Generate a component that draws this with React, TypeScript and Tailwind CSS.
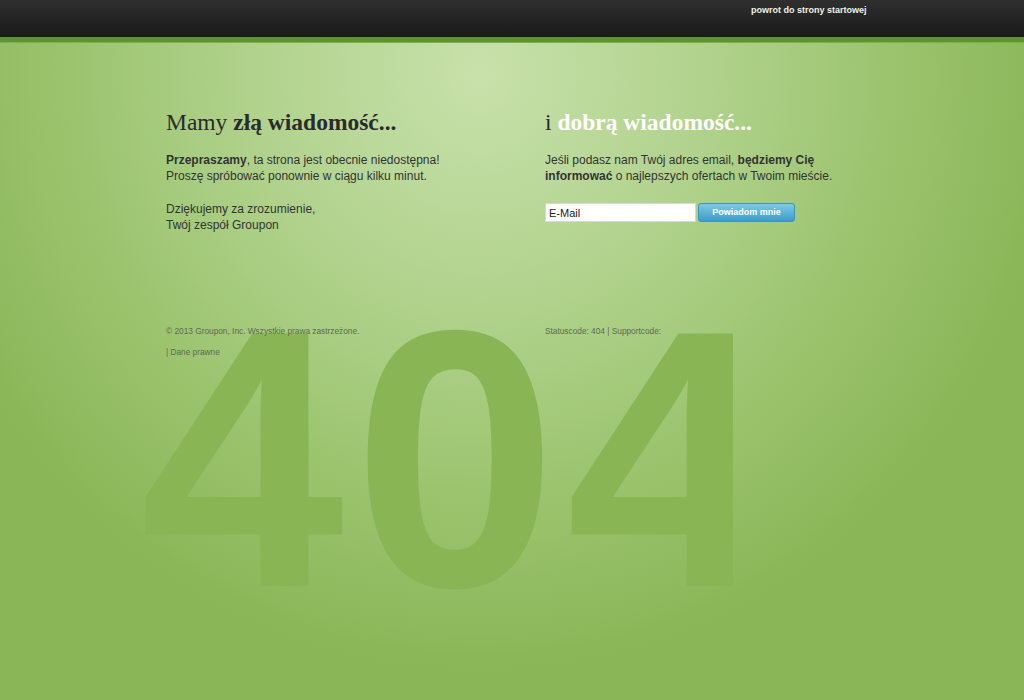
const sans = "font-['Liberation_Sans',Arial,sans-serif]";
const serif = "font-['Liberation_Serif',Georgia,serif]";

function TopBar() {
  return (
    <div>
      <div className="h-[37px] bg-linear-to-b from-[#2f2f2f] to-[#1a1a1a] flex">
        <a href="#" className={`${sans} ml-[751px] mt-[4px] text-[9px] font-bold text-[#eef2e8] leading-[12px]`}>
          powrot do strony startowej
        </a>
      </div>
      <div className="h-[5px] bg-[#5e9430]" />
      <div className="h-px bg-[#7fae4c]" />
    </div>
  );
}

export default function App() {
  return (
    <div className={`relative min-h-[700px] overflow-hidden bg-[#8ab657] ${sans}`}>
      <TopBar />
      <div className="absolute inset-x-0 top-[43px] bottom-0 bg-[radial-gradient(ellipse_580px_600px_at_480px_30px,#c8e1ab_0%,#b3d490_35%,#9cc46f_70%,#8ab657_100%)]" />

      {/* big 404 behind the footer */}
      <div className="absolute left-[140px] top-[276px] w-[593px] overflow-hidden">
        <div className={`${sans} text-[367px] leading-none font-bold tracking-[9px] text-[#89b555] whitespace-nowrap`}>
          404
        </div>
      </div>

      <div className="relative flex pl-[166px] pt-[65px]">
        <div className="w-[379px]">
          <h1 className={`${serif} text-[23.5px] leading-[28px] text-[#2b2b2b]`}>
            Mamy <b>złą wiadomość...</b>
          </h1>
          <p className="mt-[16px] text-[12px] leading-[16px] text-[#333]">
            <b>Przepraszamy</b>, ta strona jest obecnie niedostępna!
            <br />
            Proszę spróbować ponownie w ciągu kilku minut.
          </p>
          <p className="mt-[17px] text-[12px] leading-[16px] text-[#333]">
            Dziękujemy za zrozumienie,
            <br />
            Twój zespół Groupon
          </p>
        </div>
        <div className="w-[379px]">
          <h1 className={`${serif} text-[23.5px] leading-[28px] text-[#2b2b2b]`}>
            i <b className="text-white">dobrą wiadomość...</b>
          </h1>
          <p className="mt-[16px] text-[12px] leading-[16px] text-[#333]">
            Jeśli podasz nam Twój adres email, <b>będziemy Cię</b>
            <br />
            <b>informować</b> o najlepszych ofertach w Twoim mieście.
          </p>
          <div className="mt-[19px] flex items-center gap-[2px]">
            <input
              defaultValue="E-Mail"
              className="w-[151px] h-[19px] bg-white border border-[#d8d8d8] px-[3px] text-[11px] text-[#222] outline-none"
            />
            <button className="w-[97px] h-[19px] rounded-[3px] border border-[#3b95bd] bg-linear-to-b from-[#7ccae6] to-[#3a9dc8] text-[9px] font-bold text-white">
              Powiadom mnie
            </button>
          </div>
        </div>
      </div>

      <div className="relative flex pl-[166px] pt-[92px] text-[8.3px] leading-[12px] text-[#5c6b50]">
        <div className="w-[379px]">
          <p>© 2013 Groupon, Inc. Wszystkie prawa zastrzeżone.</p>
          <p className="mt-[9px]">| Dane prawne</p>
        </div>
        <div className="w-[379px]">
          <p>Statuscode: 404 | Supportcode:</p>
        </div>
      </div>
    </div>
  );
}
